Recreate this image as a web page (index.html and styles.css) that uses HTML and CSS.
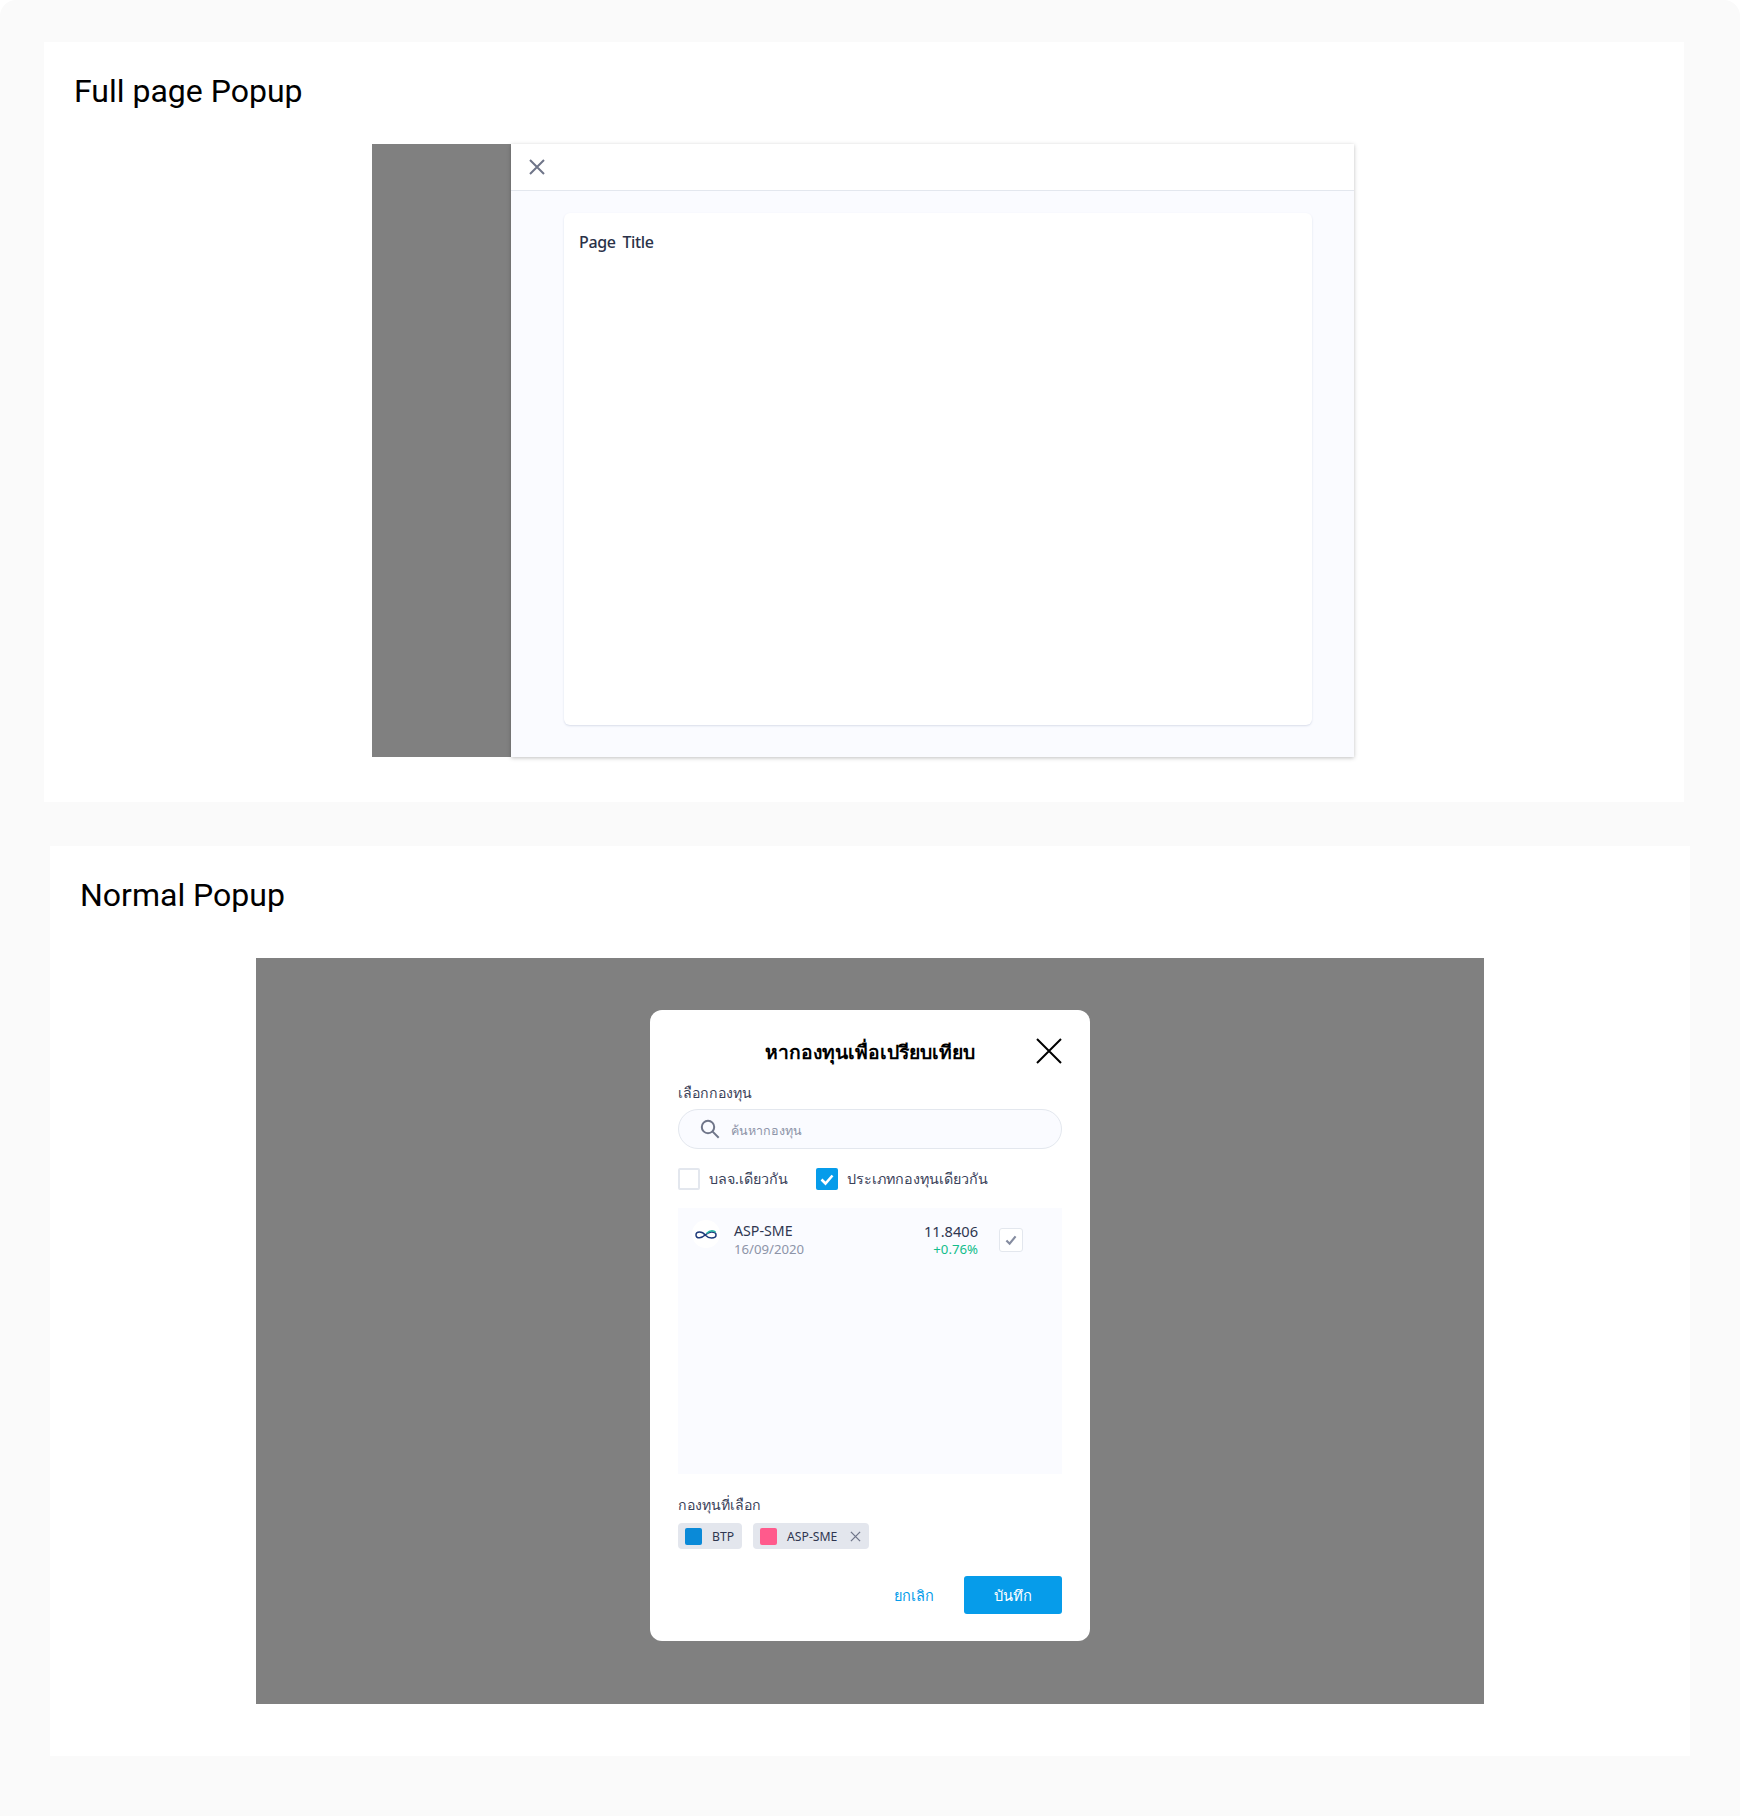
FILE: index.html
```html
<!DOCTYPE html>
<html lang="th">
<head>
<meta charset="utf-8">
<title>Popups</title>
<link rel="stylesheet" href="styles.css">
</head>
<body>
<main class="page">
  <section class="board board-full">
    <h1 class="board-title">Full page Popup</h1>
    <div class="full-demo">
      <div class="scrim-side"></div>
      <div class="full-panel">
        <header class="full-head">
          <svg class="full-close" viewBox="0 0 16 16" aria-hidden="true"><path d="M1 1l14 14M15 1L1 15"/></svg>
        </header>
        <div class="full-body">
          <div class="full-card"><h2 class="page-title">Page Title</h2></div>
        </div>
      </div>
    </div>
  </section>

  <section class="board board-normal">
    <h1 class="board-title">Normal Popup</h1>
    <div class="normal-demo">
      <div class="modal">
        <header class="modal-head">
          <h2 class="modal-title">หากองทุนเพื่อเปรียบเทียบ</h2>
          <svg class="modal-close" viewBox="0 0 26 26" aria-hidden="true"><path d="M1 1l24 24M25 1L1 25"/></svg>
        </header>
        <div class="field-label">เลือกกองทุน</div>
        <div class="search">
          <svg class="search-icon" viewBox="0 0 20 20" aria-hidden="true"><circle cx="8" cy="8" r="6.200"/><path d="M12.400 12.400l6.300 6.300"/></svg>
          <span class="search-text">ค้นหากองทุน</span>
        </div>
        <div class="filters">
          <label class="filter"><span class="box"></span>บลจ.เดียวกัน</label>
          <label class="filter"><span class="box box-on"><svg viewBox="0 0 22 22" aria-hidden="true"><path d="M5.500 11.500l4 4 7-8"/></svg></span>ประเภทกองทุนเดียวกัน</label>
        </div>
        <div class="fund-list">
          <div class="fund">
            <span class="fund-logo">
              <svg viewBox="0 0 22 11" aria-hidden="true">
                <path class="inf-a" d="M10.500 6.200C8.500 3.800 6.500 3 4.500 3 2.400 3 1 4.200 1 5.900S2.600 8.800 4.500 8.800c2.400 0 4.300-1.500 6-3 1.800-1.600 3.700-2.800 6-2.800 2.500 0 4.500 1.200 4.500 3s-1.900 3-4.500 3c-2.300 0-4.200-.9-6-2.800"/>
                <path class="inf-b" d="M11.500 4.600C13.200 2.800 15 1.800 17 1.800c1.500 0 2.700.5 3.500 1.500"/>
              </svg>
            </span>
            <div class="fund-name">
              <div class="fund-code">ASP-SME</div>
              <div class="fund-date">16/09/2020</div>
            </div>
            <div class="fund-nums">
              <div class="fund-nav">11.8406</div>
              <div class="fund-change">+0.76%</div>
            </div>
            <span class="fund-check"><svg viewBox="0 0 24 24" aria-hidden="true"><path d="M7 12.500l3.500 3.500 6.500-8"/></svg></span>
          </div>
        </div>
        <div class="field-label selected-label">กองทุนที่เลือก</div>
        <div class="chips">
          <span class="chip"><i class="swatch swatch-blue"></i>BTP</span>
          <span class="chip"><i class="swatch swatch-pink"></i>ASP-SME<svg class="chip-x" viewBox="0 0 12 12" aria-hidden="true"><path d="M1 1l10 10M11 1L1 11"/></svg></span>
        </div>
        <footer class="modal-actions">
          <span class="btn-text">ยกเลิก</span>
          <span class="btn-primary">บันทึก</span>
        </footer>
      </div>
    </div>
  </section>
</main>
</body>
</html>
```

FILE: styles.css
```css
* { box-sizing: border-box; }
html, body { margin: 0; padding: 0; background: #fff; }
body { font-family: "Noto Sans", "Open Sans", "DejaVu Sans", sans-serif; }
.page {
  width: 1740px;
  height: 1816px;
  background: #fafafa;
  border-radius: 16px 16px 0 0;
  padding-top: 42px;
  overflow: hidden;
}
.board { background: #fff; }
.board-full { width: 1640px; height: 760px; margin-left: 44px; padding-top: 25px; }
.board-normal { width: 1640px; height: 910px; margin: 44px 0 0 50px; padding-top: 25px; }
.board-title {
  margin: 0 0 0 30px;
  font: 400 32px/48px Roboto, sans-serif;
  color: #000;
}
.full-demo {
  display: flex;
  width: 982px;
  height: 613px;
  margin: 29px 0 0 328px;
}
.scrim-side { width: 139px; background: #808080; }
.full-panel {
  flex: 1;
  display: flex;
  flex-direction: column;
  background: #fafbff;
  box-shadow: 0 1px 4px rgba(0, 0, 0, .25);
}
.full-head {
  height: 47px;
  background: #fff;
  border-bottom: 1px solid #e3e7ee;
  padding: 15px 0 0 18px;
}
.full-close { display: block; width: 16px; height: 16px; fill: none; stroke: #6f7589; stroke-width: 2; }
.full-body { flex: 1; padding: 22px 42px 32px 53px; }
.full-card {
  height: 100%;
  background: #fff;
  border-radius: 6px;
  box-shadow: 0 1px 2px rgba(120, 135, 170, .25);
  padding: 17px 15px;
}
.page-title {
  margin: 0;
  font: 500 16px/24px "Noto Sans", sans-serif;
  letter-spacing: -.35px;
  word-spacing: 3px;
  color: #2a3148;
}
.normal-demo {
  width: 1228px;
  height: 746px;
  margin: 39px 0 0 206px;
  padding-top: 52px;
  background: #808080;
}
.modal {
  width: 440px;
  height: 631px;
  margin: 0 auto;
  padding: 0 28px;
  background: #fff;
  border-radius: 12px;
  display: flex;
  flex-direction: column;
}
.modal-head {
  height: 72px;
  display: flex;
  align-items: flex-start;
  justify-content: center;
  position: relative;
  padding-top: 26px;
}
.modal-title {
  margin: 0;
  font: 600 19.300px/32px "Noto Sans", "DejaVu Sans", sans-serif;
  color: #000;
}
.modal-close {
  position: absolute;
  right: 0;
  top: 28px;
  width: 26px;
  height: 26px;
  fill: none;
  stroke: #000;
  stroke-width: 2;
}
.field-label { font-size: 14.100px; line-height: 22px; color: #3a4159; height: 27px; }
.search {
  height: 40px;
  border: 1px solid #e3e7ee;
  border-radius: 20px;
  background: #fafbff;
  display: flex;
  align-items: center;
  padding-left: 21px;
}
.search-icon { width: 20px; height: 20px; fill: none; stroke: #6f7589; stroke-width: 2; }
.search-text { margin-left: 11px; font-size: 12.500px; line-height: 20px; padding-top: 3px; color: #8d94a8; }
.filters { display: flex; gap: 28px; margin-top: 18px; height: 23px; }
.filter { display: flex; align-items: center; font-size: 14.300px; color: #3a4159; }
.box {
  width: 22px;
  height: 22px;
  margin-right: 9px;
  border: 2px solid #e3e7ee;
  border-radius: 2px;
  background: #fff;
}
.box-on { border: 0; background: #069cea; }
.box-on svg { display: block; fill: none; stroke: #fff; stroke-width: 2.600; }
.fund-list { height: 266px; margin-top: 18px; background: #fafbff; padding: 12px 39px 0 14px; }
.fund { display: flex; align-items: flex-start; }
.fund-logo {
  width: 28px;
  height: 28px;
  border-radius: 50%;
  background: #fff;
  display: flex;
  align-items: center;
  justify-content: center;
}
.fund-logo svg { width: 22px; height: 11px; fill: none; }
.inf-a { stroke: #1d3a7a; stroke-width: 1.500; }
.inf-b { stroke: #23b7a4; stroke-width: 1.500; }
.fund-name { margin-left: 14px; flex: 1; }
.fund-code { font-size: 14.200px; line-height: 20px; color: #2f3650; margin-top: 1px; }
.fund-date, .fund-change { font-size: 13.200px; line-height: 17px; }
.fund-date { color: #8d94a8; }
.fund-nums { text-align: right; }
.fund-nav { font-size: 14.600px; line-height: 20px; color: #2f3650; margin-top: 1px; }
.fund-change { color: #12bd8b; }
.fund-check {
  width: 24px;
  height: 24px;
  margin: 8px 0 0 21px;
  background: #fff;
  border: 1px solid #e3e7ee;
  border-radius: 3px;
}
.fund-check svg { display: block; width: 22px; height: 22px; fill: none; stroke: #858ca0; stroke-width: 2.400; }
.selected-label { margin-top: 20px; height: 29px; }
.chips { display: flex; gap: 11px; height: 26px; }
.chip {
  display: flex;
  align-items: center;
  height: 26px;
  padding: 1px 8px 0 7px;
  background: #e3e6ed;
  border-radius: 4px;
  font-size: 12.200px;
  color: #2f3650;
}
.swatch { width: 17px; height: 17px; margin-right: 10px; border-radius: 2px; }
.swatch-blue { background: #0a8ad8; }
.swatch-pink { background: #ff5a8c; }
.chip-x { width: 11px; height: 11px; margin-left: 13px; fill: none; stroke: #6f7589; stroke-width: 1.400; }
.modal-actions { display: flex; justify-content: flex-end; align-items: center; gap: 30px; margin-top: 27px; }
.btn-text { font-size: 14.500px; padding-top: 1px; color: #069cea; }
.btn-primary {
  width: 98px;
  height: 38px;
  padding-top: 1px;
  background: #069cea;
  color: #fff;
  border-radius: 3px;
  font-size: 14.700px;
  display: flex;
  align-items: center;
  justify-content: center;
}
```
